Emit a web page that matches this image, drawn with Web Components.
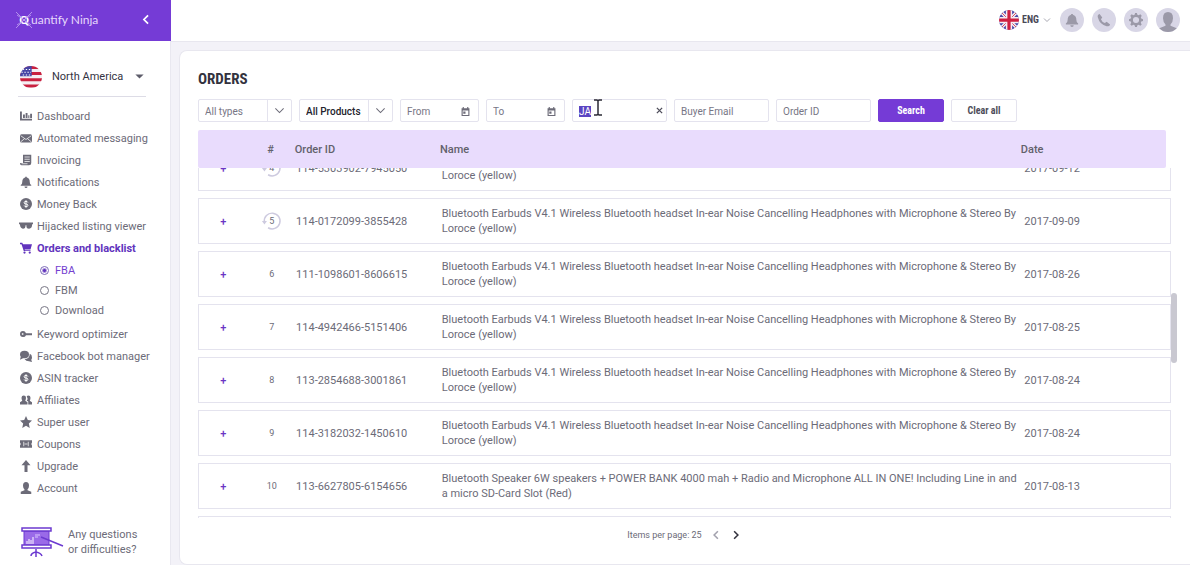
<!DOCTYPE html>
<html lang="en">
<head>
<meta charset="utf-8">
<title>Orders</title>
<style>
  body {
    margin: 0;
    background: #f3f2f8;
    color: #6c6b78;
    font-family: Roboto, "Liberation Sans", sans-serif;
    font-size: 11px;
    --accent: #753bd6;
    --line: #e4e3ee;
    --narrow: "Roboto Condensed", "Liberation Sans Narrow", Roboto, sans-serif;
  }
</style>
</head>
<body>
<app-shell>
  <app-brand slot="brand"></app-brand>
  <top-bar slot="top"></top-bar>
  <side-menu slot="side">
    <region-picker></region-picker>
    <nav-item icon="chart">Dashboard</nav-item>
    <nav-item icon="mail">Automated messaging</nav-item>
    <nav-item icon="invoice">Invoicing</nav-item>
    <nav-item icon="bell">Notifications</nav-item>
    <nav-item icon="dollar">Money Back</nav-item>
    <nav-item icon="glasses">Hijacked listing viewer</nav-item>
    <nav-item icon="cart" active>Orders and blacklist</nav-item>
    <nav-options options="FBA,FBM,Download" value="FBA"></nav-options>
    <nav-item icon="key">Keyword optimizer</nav-item>
    <nav-item icon="chat">Facebook bot manager</nav-item>
    <nav-item icon="dollar">ASIN tracker</nav-item>
    <nav-item icon="users">Affiliates</nav-item>
    <nav-item icon="star">Super user</nav-item>
    <nav-item icon="ticket">Coupons</nav-item>
    <nav-item icon="up">Upgrade</nav-item>
    <nav-item icon="user">Account</nav-item>
    <help-link>Any questions<br>or difficulties?</help-link>
  </side-menu>
  <page-card heading="ORDERS">
    <filter-bar></filter-bar>
    <order-table></order-table>
    <page-switch>Items per page: 25</page-switch>
  </page-card>
</app-shell>

<script>
const icons = {
  chart: '<path d="M0 2h2.500v9.500H16V14H0zM4 6h2.500v4.500H4zM7.500 4H10v6.500H7.500zM11 7h1.500v3.500H11zM13.500 5H16v5.500h-2.500z"/>',
  mail: '<rect y="3" width="16" height="11" rx="2"/><path d="M1 5l7 5 7-5M1 13l5-4M15 13l-5-4" fill="none" stroke="#fff"/>',
  invoice: '<path d="M4 1h11v11q0 3-3 3H2q-2 0-2-3h4z"/><path d="M6 4h7M6 7h7M6 10h7M2 13h8" stroke="#fff" fill="none"/>',
  bell: '<path d="M7 1h2v1q4 1 4 6 0 3 2 4v1H1v-1q2-1 2-4 0-5 4-6zM6 14h4q0 2-2 2t-2-2z"/>',
  dollar: '<circle cx="8" cy="8" r="8"/><path d="M10.500 6Q10 4.500 8 4.500 5.500 4.500 5.500 6.300T8 8t2.500 1.800T8 11.500Q6 11.500 5.500 10M8 3v10" fill="none" stroke="#fff" stroke-width="1.300"/>',
  glasses: '<path d="M0 4h16v2h-1q0 5-3.500 5T8.500 7h-1q0 4-3 4T1 6H0z"/>',
  cart: '<path d="M0 1h3l1 2h12l-2 7H6l1 1h7v1H5L2 3H0z"/><circle cx="6" cy="14" r="1.500"/><circle cx="13" cy="14" r="1.500"/>',
  key: '<path d="M4 4q3 0 4 3h8v2.500H8Q7 12 4 12a4 4 0 0 1 0-8zM2.500 7v2h2V7z" fill-rule="evenodd"/>',
  chat: '<path d="M6 1q6 0 6 5t-6 5l-2 0-4 2 1-4Q0 8 0 6q0-5 6-5z"/><path d="M13 5q3 1 3 5 0 2-1 3l1 3-4-1q-4 0-6-3 7 0 7-7z"/>',
  users: '<path d="M5 2q3 0 3 3 0 2-1 4l3 2v3H0v-3l3-2Q2 7 2 5q0-3 3-3z"/><path d="M11 2q3 0 3 3 0 2-1 4l3 2v3h-5v-4l-2-1q2-3 0-6 1-1 2-1z"/>',
  star: '<path d="M8 0l2.400 5.300 5.600.700-4.200 4 1.200 6L8 13l-5 3 1.200-6L0 6l5.600-.700z"/>',
  ticket: '<path d="M0 3h16v3q-2 2 0 4v3H0v-3q2-2 0-4z"/><path d="M5 5v6M11 5v6M6 8h4" stroke="#fff" fill="none"/>',
  up: '<path d="M8 0l6 7h-4v9H6V7H2z"/>',
  user: '<path d="M8 0q4 0 4 5 0 3-2 5v1l5 2v3H1v-3l5-2v-1Q4 8 4 5q0-5 4-5z"/>',
  phone: '<path d="M3 1l3 4-1.500 2q1 3 4.500 4.500L11 10l4 3q-1 3-4 2Q3 13 1 5q-1-3 2-4z"/>',
  gear: '<path d="M7 0h2l.600 2 1.400.600L13 1.500 14.500 3l-1 2 .500 1.400 2 .600v2l-2 .600-.500 1.400 1 2-1.500 1.500-2-1-1.400.500L9 16H7l-.600-2-1.400-.500-2 1L1.500 13l1-2L2 9.600 0 9V7l2-.600L2.500 5l-1-2L3 1.500l2 1L6.400 2zM8 4.500a3.500 3.500 0 1 0 0 7 3.500 3.500 0 0 0 0-7z" fill-rule="evenodd"/>',
  down: '<path d="M2 5l6 6 6-6" fill="none" stroke="currentColor" stroke-width="1.500"/>',
  caret: '<path d="M2 5h12l-6 6z"/>',
  left: '<path d="M11 2L5 8l6 6" fill="none" stroke="currentColor" stroke-width="2.500"/>',
  right: '<path d="M5 2l6 6-6 6" fill="none" stroke="currentColor" stroke-width="2.500"/>',
  close: '<path d="M2 2l12 12M14 2L2 14" fill="none" stroke="currentColor" stroke-width="3"/>',
  calendar: '<path d="M1 2h2V0h2v2h6V0h2v2h2v14H1zM3 6v8h10V6zM4 8h4v4H4z" fill-rule="evenodd"/>',
  again: '<path d="M1.200 9A7 7 0 1 1 4.500 14" fill="none" stroke="currentColor" stroke-width="1.300"/><path d="M-1 8h4.500L1.300 11z"/>',
  us: '<clipPath id="c"><circle cx="8" cy="8" r="8"/></clipPath><g clip-path="url(#c)"><path fill="#f4eef2" d="M0 0h16v16H0z"/><path d="M0 1h16M0 5.500h16M0 10h16M0 14.500h16" stroke="#c9203f" stroke-width="2.200"/><path fill="#4746a6" d="M0 0h8.500v7.500H0z"/><path d="M2 2.500h6M1 4.500h7M2 6.500h6" stroke="#fff" stroke-width=".8" stroke-dasharray="1 1.200"/></g>',
  uk: '<clipPath id="c"><circle cx="8" cy="8" r="8"/></clipPath><g clip-path="url(#c)"><path fill="#4a48a8" d="M0 0h16v16H0z"/><path d="M0 0l16 16M16 0L0 16" stroke="#f4eef4" stroke-width="2.600"/><path d="M0 0l16 16M16 0L0 16" stroke="#cf3652" stroke-width=".7"/><path d="M8 0v16M0 8h16" stroke="#f4eef4" stroke-width="5"/><path d="M8 0v16M0 8h16" stroke="#cf2042" stroke-width="2.600"/></g>'
};

const bluetooth = 'Bluetooth Earbuds V4.1 Wireless Bluetooth headset In-ear Noise Cancelling Headphones with Microphone & Stereo By Loroce (yellow)';
const orders = [
  { n: 4, id: '114-5303902-7945050', name: bluetooth, date: '2017-09-12', repeat: true },
  { n: 5, id: '114-0172099-3855428', name: bluetooth, date: '2017-09-09', repeat: true },
  { n: 6, id: '111-1098601-8606615', name: bluetooth, date: '2017-08-26' },
  { n: 7, id: '114-4942466-5151406', name: bluetooth, date: '2017-08-25' },
  { n: 8, id: '113-2854688-3001861', name: bluetooth, date: '2017-08-24' },
  { n: 9, id: '114-3182032-1450610', name: bluetooth, date: '2017-08-24' },
  { n: 10, id: '113-6627805-6154656', name: 'Bluetooth Speaker 6W speakers + POWER BANK 4000 mah + Radio and Microphone ALL IN ONE! Including Line in and a micro SD-Card Slot (Red)', date: '2017-08-13' }
];

class BaseElement extends HTMLElement {
  connectedCallback() {
    if (this.shadowRoot) return;
    const template = document.createElement('template');
    template.innerHTML = this.template();
    this.attachShadow({ mode: 'open' });
    this.shadowRoot.appendChild(template.content.cloneNode(true));
    this.ready();
  }

  ready() {}
}

class UiIcon extends BaseElement {
  template() {
    return `
      <style>
        :host { display: inline-flex; flex: none; width: 12px; height: 12px; }
        svg { width: 100%; height: 100%; fill: currentColor; overflow: visible; }
      </style>
      <svg viewBox="0 0 16 16" aria-hidden="true">${icons[this.getAttribute('name')]}</svg>
    `;
  }
}

class AppShell extends BaseElement {
  template() {
    return `
      <style>
        :host {
          display: grid;
          grid-template: 41px 1fr / 171px 1fr;
          height: 100vh;
        }
        main {
          display: grid;
          min-height: 0;
          padding: 8px 0 0 8px;
          border-top: 1px solid #e8e7ef;
          box-sizing: border-box;
        }
        aside { background: #fff; border-right: 1px solid #e9e8f0; }
      </style>
      <slot name="brand"></slot>
      <slot name="top"></slot>
      <aside><slot name="side"></slot></aside>
      <main><slot></slot></main>
    `;
  }
}

class AppBrand extends BaseElement {
  template() {
    return `
      <style>
        :host {
          display: flex;
          align-items: center;
          justify-content: space-between;
          padding: 0 18px 2px 17px;
          background: var(--accent);
          color: #e6d8fb;
        }
        a { display: flex; align-items: center; color: inherit; text-decoration: none; font: 12px Lato, sans-serif; }
        .mark { position: relative; width: 14px; text-align: center; font-weight: 700; color: #fff; }
        .mark svg { position: absolute; left: -1px; top: 0; width: 16px; height: 16px; }
        button { display: flex; padding: 0; border: 0; background: none; color: #fff; }
        ui-icon { width: 14px; height: 11px; }
      </style>
      <a href="#"><span class="mark"><svg viewBox="0 0 16 16"><path d="M0 0l16 16M16 0L0 16M1 3l14 10M15 3L1 13" stroke="#c3a4f3" stroke-width=".8"/></svg>Q</span>uantify Ninja</a>
      <button aria-label="Collapse menu"><ui-icon name="left"></ui-icon></button>
    `;
  }
}

class TopBar extends BaseElement {
  template() {
    return `
      <style>
        :host {
          display: flex;
          align-items: center;
          justify-content: flex-end;
          gap: 8px;
          padding: 0 10px 2px 0;
          background: #fff;
        }
        label { display: flex; align-items: center; margin-right: 1px; }
        label ui-icon:first-child { width: 20px; height: 20px; margin-right: 3px; }
        label ui-icon:last-child { width: 8px; height: 8px; color: #8a8997; }
        select {
          appearance: none;
          width: 21px;
          padding: 0;
          border: 0;
          background: none;
          color: #4a4957;
          font: 700 10px var(--narrow);
        }
        button {
          display: flex;
          align-items: center;
          justify-content: center;
          width: 24px;
          height: 24px;
          padding: 0;
          border: 0;
          border-radius: 50%;
          background: #d8d6e6;
          color: #9b99a8;
          overflow: hidden;
        }
        button ui-icon { width: 14px; height: 14px; }
        button:last-child ui-icon { width: 20px; height: 20px; margin-top: 4px; }
      </style>
      <label><ui-icon name="uk"></ui-icon><select aria-label="Language"><option>ENG</option></select><ui-icon name="down"></ui-icon></label>
      <button aria-label="Alerts"><ui-icon name="bell"></ui-icon></button>
      <button aria-label="Call"><ui-icon name="phone"></ui-icon></button>
      <button aria-label="Settings"><ui-icon name="gear"></ui-icon></button>
      <button aria-label="Profile"><ui-icon name="user"></ui-icon></button>
    `;
  }
}

class SideMenu extends BaseElement {
  template() {
    return `
      <style>
        :host { display: block; padding: 16px 0 0 18px; font-size: 11px; }
      </style>
      <nav><slot></slot></nav>
    `;
  }
}

class RegionPicker extends BaseElement {
  template() {
    return `
      <style>
        :host { display: block; margin: 0 24px 8px 0; border-bottom: 1px solid #dddce6; }
        label { display: flex; align-items: center; height: 39px; padding: 0 1px 0 2px; }
        label ui-icon:first-child { width: 22px; height: 22px; margin-right: 10px; }
        label ui-icon:last-child { width: 11px; height: 11px; color: #5d5c6a; }
        select { appearance: none; flex: 1; padding: 0; border: 0; background: none; color: #34333f; font: 11px Roboto, sans-serif; }
      </style>
      <label><ui-icon name="us"></ui-icon><select aria-label="Region"><option>North America</option></select><ui-icon name="caret"></ui-icon></label>
    `;
  }
}

class NavItem extends BaseElement {
  template() {
    return `
      <style>
        :host { display: block; }
        :host([active]) { color: #6134bd; font-weight: 700; }
        a { display: flex; align-items: center; gap: 5px; height: 22px; padding-left: 2px; color: inherit; text-decoration: none; white-space: nowrap; }
        ui-icon[name="glasses"] { width: 14px; height: 14px; margin: 0 -1px; }
      </style>
      <a href="#"><ui-icon name="${this.getAttribute('icon')}"></ui-icon><span><slot></slot></span></a>
    `;
  }
}

class NavOptions extends BaseElement {
  template() {
    const value = this.getAttribute('value');
    const rows = this.getAttribute('options').split(',').map(name => `
      <label><input type="radio" name="orders" ${name === value ? 'checked' : ''}>${name}</label>`);
    return `
      <style>
        :host { display: block; padding: 1px 0 3px 22px; }
        label { display: flex; align-items: center; gap: 6px; height: 20px; }
        label:has(:checked) { color: #7440d0; }
        input { appearance: none; width: 9px; height: 9px; margin: 0; border: 1px solid #777685; border-radius: 50%; }
        input:checked { border-color: #7c6bb8; background: radial-gradient(#6134bd 0 1px, #fff 3px); }
      </style>
      ${rows.join('')}
    `;
  }
}

class HelpLink extends BaseElement {
  template() {
    return `
      <style>
        :host { display: block; padding: 28px 0 0 2px; }
        a { display: flex; gap: 4px; color: inherit; text-decoration: none; line-height: 15px; }
        svg { flex: none; width: 44px; height: 32px; }
      </style>
      <a href="#">
        <svg viewBox="0 0 44 32" aria-hidden="true">
          <path d="M4 4h25v16H4z" fill="#9a6ae8" stroke="#6c3ad0"/>
          <path d="M2 1h29v3H2zM2 18h29v3H2z" fill="#fff" stroke="#6c3ad0" stroke-width="1.500"/>
          <path d="M7 17v-3M9 17v-5M11 17v-4M13 17v-7" stroke="#fff"/>
          <path d="M15 8h5M15 10h3" stroke="#dcc8ff"/>
          <path d="M21 10l22 9M16 22v8M11 29q0-3 5-4 5 1 6 4" fill="none" stroke="#6c3ad0" stroke-width="1.500"/>
        </svg>
        <span><slot></slot></span>
      </a>
    `;
  }
}

class PageCard extends BaseElement {
  template() {
    return `
      <style>
        :host {
          display: flex;
          flex-direction: column;
          min-width: 0;
          min-height: 0;
          padding: 18px 19px 0 18px;
          box-sizing: border-box;
          background: #fff;
          border: 1px solid #e8e7ef;
          border-right: 0;
          border-radius: 8px 0 0 8px;
        }
        h1 { margin: 0 0 10px; color: #33323e; font: 700 15px/20px var(--narrow); }
      </style>
      <h1>${this.getAttribute('heading')}</h1>
      <slot></slot>
    `;
  }
}

class FilterBar extends BaseElement {
  template() {
    return `
      <style>
        :host { display: block; margin-bottom: 8px; }
        form { display: flex; gap: 7px; }
        .field {
          display: flex;
          align-items: center;
          position: relative;
          width: 95px;
          height: 23px;
          border: 1px solid var(--line);
          border-radius: 2px;
          box-sizing: border-box;
        }
        .pick { width: 94px; }
        .date { width: 79px; }
        input, select {
          appearance: none;
          flex: 1;
          min-width: 0;
          height: 100%;
          padding: 1px 0 0 6px;
          border: 0;
          outline: 0;
          background: none;
          color: #777685;
          font: 10px Roboto, sans-serif;
        }
        input::placeholder { color: #777685; opacity: 1; }
        input::selection { background: #5b45c2; color: #fff; }
        .strong select { color: #24232d; font-weight: 500; }
        .pick ui-icon { padding: 6px; width: 11px; height: 11px; border-left: 1px solid var(--line); }
        .date ui-icon { width: 9px; height: 9px; margin: 2px 8px 0 0; }
        .field button { display: flex; padding: 0 3px 0 0; height: auto; width: auto; border: 0; }
        .field button ui-icon { width: 7px; height: 7px; }
        .beam { position: absolute; left: 20px; top: -1px; width: 10px; height: 17px; }
        button {
          width: 66px;
          height: 23px;
          padding: 0;
          border: 1px solid var(--line);
          border-radius: 2px;
          background: #fff;
          color: #4e4d5a;
          font: 700 10px var(--narrow);
        }
        .primary { border-color: var(--accent); background: var(--accent); color: #fff; }
      </style>
      <form>
        <label class="field pick"><select aria-label="Type"><option>All types</option></select><ui-icon name="down"></ui-icon></label>
        <label class="field pick strong"><select aria-label="Product"><option>All Products</option></select><ui-icon name="down"></ui-icon></label>
        <label class="field date"><input placeholder="From" aria-label="From"><ui-icon name="calendar"></ui-icon></label>
        <label class="field date"><input placeholder="To" aria-label="To"><ui-icon name="calendar"></ui-icon></label>
        <div class="field">
          <input id="name" value="JA" aria-label="Name">
          <button type="button" aria-label="Clear"><ui-icon name="close"></ui-icon></button>
          <svg class="beam" viewBox="0 0 10 17" aria-hidden="true"><path d="M1 1h3l1 1 1-1h3M5 2v13M1 16h3l1-1 1 1h3" fill="none" stroke="#2b2a35" stroke-width="1.500"/></svg>
        </div>
        <label class="field"><input placeholder="Buyer Email" aria-label="Buyer Email"></label>
        <label class="field"><input placeholder="Order ID" aria-label="Order ID"></label>
        <button type="button" class="primary">Search</button>
        <button type="reset">Clear all</button>
      </form>
    `;
  }

  ready() {
    const input = this.shadowRoot.querySelector('#name');
    input.focus();
    input.select();
  }
}

class OrderTable extends BaseElement {
  template() {
    return `
      <style>
        :host { display: block; position: relative; flex: 1; min-height: 0; }
        .scroll { height: 100%; overflow: auto; scrollbar-width: none; }
        table, thead, tbody { display: block; }
        tr { display: grid; grid-template-columns: 5% 5% 15% 60% 15%; align-items: center; }
        thead { position: sticky; top: 0; z-index: 1; padding-right: 5px; background: #fff; }
        thead tr { height: 38px; background: #e9dcfd; border-radius: 2px; }
        th { padding: 0; color: #62616b; font-weight: 500; text-align: left; }
        tbody tr { height: 46px; margin-top: 7px; border: 1px solid var(--line); box-sizing: border-box; background: #fff; }
        td { padding: 0; line-height: 15px; }
        th:nth-child(2), td:nth-child(2) { text-align: center; }
        td:nth-child(2) { font-size: 9px; }
        td button { display: block; margin: auto; padding: 0; border: 0; background: none; color: #6a35c4; font: 500 11px/15px Roboto, sans-serif; }
        .count { display: inline-flex; position: relative; align-items: center; justify-content: center; width: 18px; height: 18px; }
        .count ui-icon { position: absolute; inset: 0; width: 18px; height: 18px; color: #cdcadf; }
        .thumb { position: absolute; z-index: 2; left: 100%; top: 42%; width: 6px; height: 18%; border-radius: 3px; background: #c9c8d1; }
      </style>
      <div class="scroll">
        <table>
          <thead><tr><th></th><th>#</th><th>Order ID</th><th>Name</th><th>Date</th></tr></thead>
          <tbody>${orders.map(o => this.row(o)).join('')}<tr></tr></tbody>
        </table>
      </div>
      <div class="thumb"></div>
    `;
  }

  row({ n, id, name, date, repeat }) {
    return `
      <tr>
        <td><button aria-label="Expand">+</button></td>
        <td><span class="count">${repeat ? '<ui-icon name="again"></ui-icon>' : ''}${n}</span></td>
        <td>${id}</td>
        <td>${name.replace('&', '&amp;')}</td>
        <td>${date}</td>
      </tr>`;
  }

  ready() {
    this.shadowRoot.querySelector('.scroll').scrollTop = 30;
  }
}

class PageSwitch extends BaseElement {
  template() {
    return `
      <style>
        :host { display: flex; align-items: center; justify-content: center; gap: 8px; height: 34px; padding-bottom: 12px; font-size: 9px; }
        button { display: flex; padding: 0 1px; border: 0; background: none; color: #33323e; }
        button:disabled { color: #a3a2ae; }
        ui-icon { width: 10px; height: 10px; }
      </style>
      <span><slot></slot></span>
      <button disabled aria-label="Previous page"><ui-icon name="left"></ui-icon></button>
      <button aria-label="Next page"><ui-icon name="right"></ui-icon></button>
    `;
  }
}

customElements.define('ui-icon', UiIcon);
customElements.define('app-shell', AppShell);
customElements.define('app-brand', AppBrand);
customElements.define('top-bar', TopBar);
customElements.define('side-menu', SideMenu);
customElements.define('region-picker', RegionPicker);
customElements.define('nav-item', NavItem);
customElements.define('nav-options', NavOptions);
customElements.define('help-link', HelpLink);
customElements.define('page-card', PageCard);
customElements.define('filter-bar', FilterBar);
customElements.define('order-table', OrderTable);
customElements.define('page-switch', PageSwitch);
</script>
</body>
</html>
